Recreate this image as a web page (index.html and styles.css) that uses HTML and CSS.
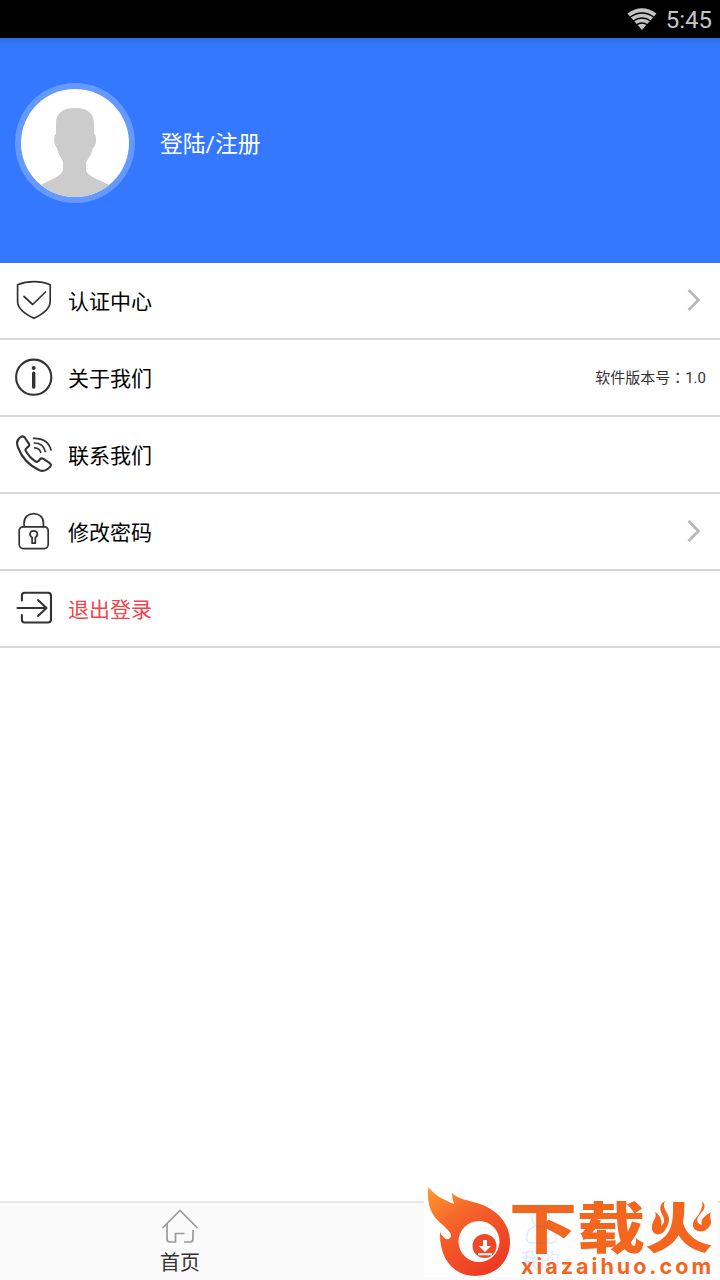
FILE: index.html
```html
<!DOCTYPE html>
<html lang="zh-CN">
<head>
    <meta charset="UTF-8">
    <meta name="viewport" content="width=device-width, initial-scale=1.0">
    <title>我的</title>
    <link rel="stylesheet" href="styles.css">
</head>
<body>
    <div class="status-bar">
        <svg class="wifi" width="30" height="22" viewBox="0 0 30 22">
            <path class="wifi-fan" d="M0.5 5.5Q15-5 29.5 5.5L15 22Z"/>
            <path class="wifi-gap" d="M3 9.3Q15 0.8 27 9.3M6 13.2Q15 6.8 24 13.2M9.2 17Q15 13 20.8 17"/>
        </svg>
        <span class="clock">5:45</span>
    </div>

    <header class="profile">
        <div class="avatar">
            <svg width="108" height="108" viewBox="0 0 108 108">
                <path d="M54 19C41 19 35 25 35 34V45C32 45 33 57 36 59C37 65 41 70 42 73V80C42 87 32 89 18 97V108H90V97C76 89 65 87 65 80V73C67 70 71 65 72 59C76 57 76 45 73 45V34C73 25 67 19 54 19Z"/>
            </svg>
        </div>
        <a class="login">登陆/注册</a>
    </header>

    <main class="menu">
        <div class="menu-item">
            <svg class="icon" width="40" height="40" viewBox="0 0 40 40">
                <path d="M20 1.7Q11 1.7 3.6 4.7V21.5C3.6 29.5 12 34.5 20 38.3C28 34.5 36.2 29.5 36.2 21.5V4.7Q29 1.7 20 1.7Z"/>
                <path d="M10 16.5L18.7 24.5L31.5 12"/>
            </svg>
            <span class="label">认证中心</span>
            <svg class="arrow" width="14" height="24" viewBox="0 0 14 24"><path d="M1.5 2L11.5 12L1.5 22"/></svg>
        </div>
        <div class="menu-item">
            <svg class="icon" width="40" height="40" viewBox="0 0 40 40">
                <circle class="thick" cx="19.7" cy="20.2" r="17.6"/>
                <path class="stem" d="M19.7 16.3V30"/>
                <circle class="dot" cx="19.7" cy="11" r="2"/>
            </svg>
            <span class="label">关于我们</span>
            <span class="version">软件版本号<span class="colon" lang="zh-TW">：</span>1.0</span>
        </div>
        <div class="menu-item">
            <svg class="icon" width="40" height="40" viewBox="0 0 40 40">
                <path class="thick" d="M6.1 3.5C2.6 6 2.4 9.5 4 13.5C8 24 16 32 25.5 36.3C29.5 38 33.3 35.7 36.2 32.6C37.2 31.5 37 30.3 35.8 29.2L29.5 24.9C28 24 27 24.2 26.1 25.2L24.5 27C23.5 28 22.2 28 20.9 27.1C17 24.4 14.3 21.3 12 17.5C11.2 16.2 11.4 15 12.4 14.2L14.2 12.6C15.4 11.7 15.5 10.6 14.7 9.4L10.7 3.5C9.4 1.8 8 2.1 6.1 3.5Z"/>
                <path d="M19.5 4.3Q34 4 37 16M20.3 9Q29.3 9 31.3 17.5M20.7 13.8Q25.5 14 26.7 18.3"/>
            </svg>
            <span class="label">联系我们</span>
        </div>
        <div class="menu-item">
            <svg class="icon" width="40" height="40" viewBox="0 0 40 40">
                <rect x="5.2" y="15.8" width="29" height="21.8" rx="4"/>
                <path d="M10.1 15.5V12C10.1 -0.5 29.4 -0.5 29.4 12V15.5"/>
                <path d="M18.1 32.2V26.4C14.8 24.3 15.6 19.8 19.7 19.8C23.8 19.8 24.6 24.3 21.3 26.4V32.2Z"/>
            </svg>
            <span class="label">修改密码</span>
            <svg class="arrow" width="14" height="24" viewBox="0 0 14 24"><path d="M1.5 2L11.5 12L1.5 22"/></svg>
        </div>
        <div class="menu-item">
            <svg class="icon" width="40" height="40" viewBox="0 0 40 40">
                <path class="thick" d="M7.9 12.5V7.5Q7.9 4.8 10.6 4.8H34Q37 4.8 37 7.8V31.5Q37 34.5 34 34.5H10.6Q7.9 34.5 7.9 31.8V27"/>
                <path class="thick" d="M3.5 20H32.5M24 12L32.5 20L24 28"/>
            </svg>
            <span class="label logout">退出登录</span>
        </div>
    </main>

    <nav class="tab-bar">
        <a class="tab">
            <svg class="tab-icon" width="40" height="38" viewBox="0 0 40 38">
                <path d="M2.5 21L20 3.5L37.5 21M7 17V32Q7 35 10 35H15.5V26.5H24.5M33 23V32Q33 35 30 35H24"/>
            </svg>
            <span>首页</span>
        </a>
        <div class="tab"></div>
    </nav>

    <!-- download site badge, lies over the second tab -->
    <div class="watermark">
        <svg width="296" height="96" viewBox="0 0 296 96">
            <defs>
                <linearGradient id="flame" x1="0" y1="0" x2="0.65" y2="1">
                    <stop offset="0" stop-color="#ff9a2e"/>
                    <stop offset="0.45" stop-color="#f4602a"/>
                    <stop offset="1" stop-color="#ee3b24"/>
                </linearGradient>
            </defs>
            <rect class="plate" x="0" y="17" width="293" height="76"/>
            <path fill="url(#flame)" d="M4.5 3C10 11 18 15 30 20C29 16 28 12 28 9C34 15 43 16 53 19C73 25 86 39 86 58C86 78 71 92 51 92C30 92 15 75 16 48C19 54 23 57 26 54C29 51 25 47 20 42C8 33 2 21 4.5 3Z"/>
            <circle class="eye" cx="55" cy="57.5" r="20.5"/>
            <circle class="pupil" cx="60.5" cy="62" r="12"/>
            <path class="eye" d="M59 56H63V62H67L61 68L55 62H59ZM54 69.3H68V71.3H54Z"/>
            <g transform="translate(0 18) scale(1 .8)">
                <text class="brand" x="85 153 221" y="58">下载火</text>
            </g>
            <path class="plate" d="M223 16H243V48L237 53H223ZM265 16H293V52H271L265 46Z"/>
            <path class="fire" d="M241 17C234 21 236 27 239 32C241 37 240 40 237 42C239 36 235 30 231 28C234 34 227 37 228 45C229 52 238 52 241 46C246 39 246 34 243 29C240 24 239 21 241 17ZM278 17C284 24 278 27 274 33C272 37 274 40 278 41C276 36 279 33 287 28C284 34 290 37 285 43C280 50 270 48 269 42C268 36 274 33 276 28C278 24 279 21 278 17Z"/>
            <text class="site" x="97" y="90" textLength="190">xiazaihuo.com</text>
            <g class="ghost">
                <circle cx="117" cy="34" r="9"/>
                <path d="M111 42C104 45 102 50 103 56Q104 59 108 59H127Q131 59 132 56C133 50 130 45 123 42"/>
                <text x="96" y="84">我的</text>
            </g>
        </svg>
    </div>
</body>
</html>
```
FILE: styles.css
```css
* {
    box-sizing: border-box;
}

body {
    font-family: Roboto, "Noto Sans CJK SC", sans-serif;
    background-color: #fff;
    color: #000;
    margin: 0;
    height: 1280px;
    display: flex;
    flex-direction: column;
    overflow: hidden;
}

.status-bar {
    height: 38px;
    background-color: #000;
    display: flex;
    justify-content: flex-end;
    align-items: center;
    gap: 9px;
    padding-right: 8px;
}

.wifi-fan {
    fill: #c4c4c4;
}

.wifi-gap {
    fill: none;
    stroke: #000;
    stroke-width: 1.4;
}

.clock {
    color: #c4c4c4;
    font-size: 24px;
    line-height: 38px;
    padding-top: 2px;
}

.profile {
    height: 225px;
    background: linear-gradient(#2e6de8, #3478ff 8px);
    display: flex;
    align-items: center;
    gap: 25px;
    padding: 0 15px 15px;
}

.avatar {
    width: 120px;
    height: 120px;
    padding: 6px;
    border-radius: 50%;
    background-color: #6699ff;
}

.avatar svg {
    display: block;
    border-radius: 50%;
    background-color: #fff;
    fill: #ccc;
}

.login {
    color: #fff;
    font-size: 22.8px;
    padding-bottom: 2px;
}

.menu {
    flex: 1;
}

.menu-item {
    height: 77px;
    border-bottom: 2px solid #d6d6d6;
    display: flex;
    align-items: center;
    padding: 0 14px 1px;
}

.icon {
    fill: none;
    stroke: #333;
    stroke-width: 1.7;
    stroke-linecap: round;
    stroke-linejoin: round;
}

.icon .thick {
    stroke-width: 2.1;
}

.icon .stem {
    stroke-width: 3.4;
}

.icon .dot {
    fill: #333;
    stroke: none;
}

.label {
    font-size: 21px;
    margin-left: 14px;
    padding-bottom: 1px;
}

.logout {
    color: #f0434c;
}

.arrow {
    margin-left: auto;
    margin-right: 5px;
    fill: none;
    stroke: #b8b8b8;
    stroke-width: 2.8;
}

.version {
    margin-left: auto;
    padding-bottom: 2px;
    font-size: 15px;
    color: #333;
}

.colon {
    font-family: "Noto Sans CJK TC", sans-serif;
}

.tab-bar {
    height: 79px;
    border-top: 2px solid #e6e6e6;
    background-color: #fafafa;
    display: flex;
}

.tab {
    flex: 1;
    display: flex;
    flex-direction: column;
    align-items: center;
    gap: 3px;
    padding-top: 4px;
    color: #333;
    font-size: 20px;
    line-height: 30px;
}

.tab-icon {
    fill: none;
    stroke: #999;
    stroke-width: 1.7;
}

.watermark {
    position: absolute;
    left: 424px;
    top: 1184px;
    width: 296px;
    height: 96px;
}

.plate {
    fill: #fefefe;
}

.eye {
    fill: #fff;
}

.pupil {
    fill: #ee4928;
}

.brand {
    font-family: "Noto Sans CJK SC", sans-serif;
    font-size: 68px;
    font-weight: 900;
    fill: #f4651d;
}

.fire {
    fill: #f4651d;
}

.site {
    font-family: Inter, sans-serif;
    font-size: 21.5px;
    font-weight: bold;
    fill: #f4651d;
}

.ghost {
    opacity: 0.14;
    fill: none;
    stroke: #3478ff;
    stroke-width: 1.5;
}

.ghost text {
    font-size: 20px;
    fill: #3478ff;
    stroke: none;
}
```
